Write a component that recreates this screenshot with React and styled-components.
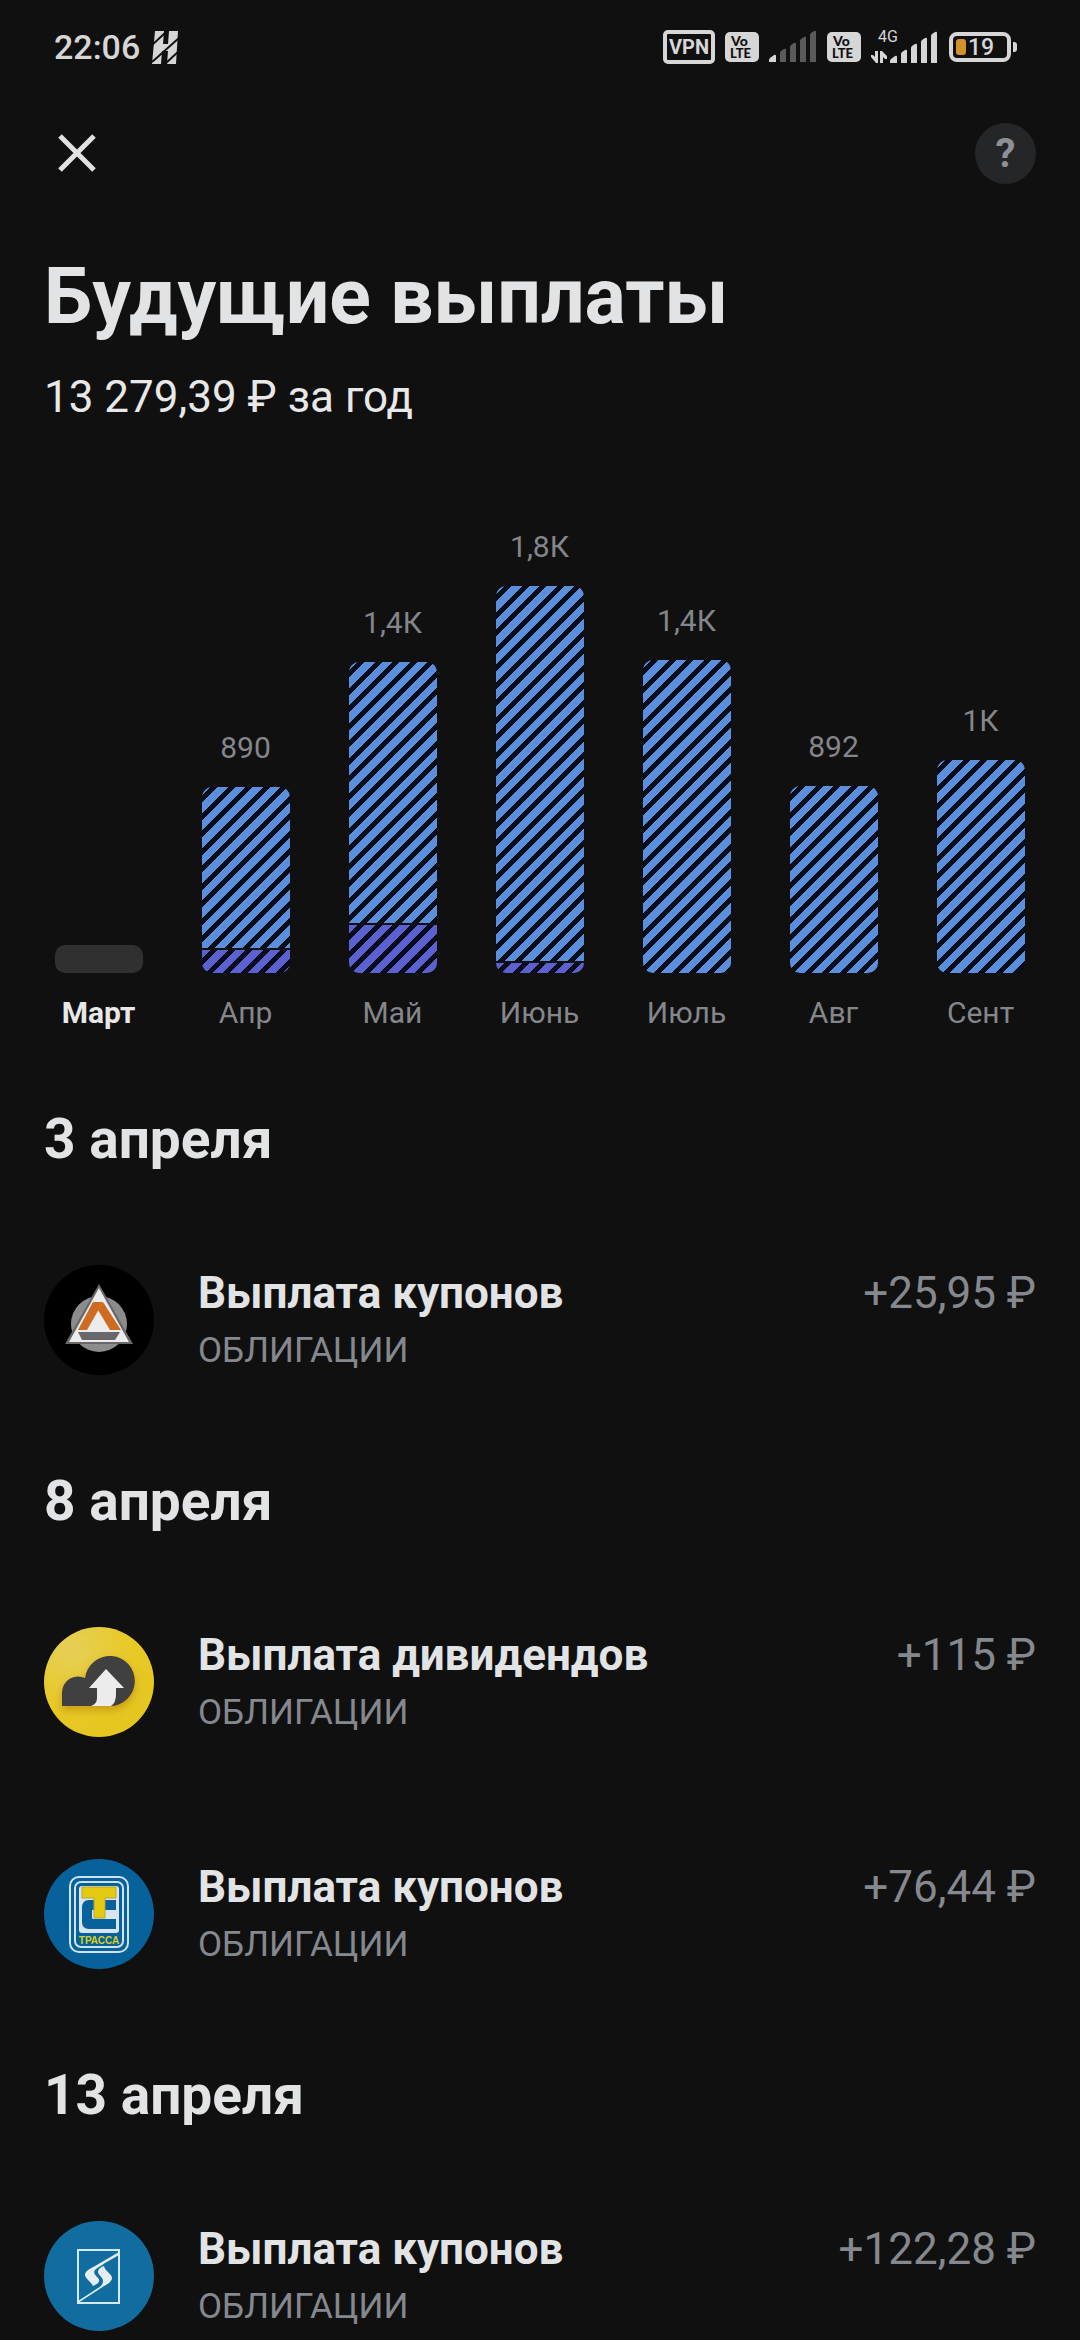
import styled, { createGlobalStyle } from "styled-components";

const GlobalStyle = createGlobalStyle`
    * {
        box-sizing: border-box;
    }

    body {
        margin: 0;
        background-color: #101010;
        color: #e2e3e4;
        font-family: Roboto, "Noto Sans", sans-serif;
    }

    h1, h2, h3, p, ul {
        margin: 0;
        padding: 0;
    }
`;

const Screen = styled.div`
    height: 100vh;
    overflow-y: auto;
    scrollbar-width: none;
`;

const StatusBar = styled.div`
    display: flex;
    align-items: center;
    justify-content: space-between;
    height: 94px;
    padding: 0 62px 0 54px;
`;

const StatusGroup = styled.div`
    display: flex;
    align-items: center;
    gap: ${({ $gap }) => $gap}px;
`;

const Clock = styled.span`
    font-size: 34px;
    line-height: 40px;
    font-weight: 500;
    color: #d6d6d6;
`;

const TopBar = styled.header`
    display: flex;
    align-items: center;
    justify-content: space-between;
    height: 118px;
    padding: 0 44px;
`;

const CloseButton = styled.button`
    display: flex;
    padding: 14px;
    border: none;
    background: none;
    cursor: pointer;
`;

const HelpButton = styled.button`
    width: 61px;
    height: 61px;
    padding: 0;
    border: none;
    border-radius: 50%;
    background-color: #252627;
    color: #8d9096;
    font-family: inherit;
    font-size: 40px;
    line-height: 61px;
    font-weight: 700;
    cursor: pointer;
`;

const Summary = styled.section`
    padding: 40px 44px 0;
`;

const Title = styled.h1`
    font-size: 77px;
    line-height: 90px;
    font-weight: 700;
`;

const Total = styled.p`
    margin-top: 29px;
    font-size: 44px;
    line-height: 52px;
    color: #e8e8e8;
`;

const Chart = styled.div`
    display: flex;
    align-items: flex-end;
    padding: 106px 26px 43px 25px;
`;

const Column = styled.div`
    flex: 1;
    display: flex;
    flex-direction: column;
    align-items: center;
`;

const ChartLabel = styled.span`
    font-size: 30px;
    line-height: 36px;
    font-weight: ${({ $active }) => ($active ? 700 : 400)};
    color: ${({ $active }) => ($active ? "#e8e8e8" : "#84868b")};
`;

const Bar = styled.div`
    display: flex;
    flex-direction: column;
    gap: 2px;
    width: 88px;
    margin: 21px 0 22px;
    border-radius: 10px;
    overflow: hidden;
`;

const EmptyBar = styled(Bar)`
    height: 28px;
    background-color: #303030;
`;

// two stripe periods per tile side, so the tiles join without a seam
const Segment = styled.div`
    background-image: repeating-linear-gradient(
        135deg,
        ${({ $color }) => $color} 0 12.5%,
        ${({ $back }) => $back} 12.5% 22.5%,
        ${({ $color }) => $color} 22.5% 25%
    );
    background-size: 35px 35px;
`;

const DayTitle = styled.h2`
    padding: 33px 44px;
    font-size: 55px;
    line-height: 64px;
    font-weight: 700;
`;

const PaymentList = styled.ul`
    list-style: none;
`;

const Payment = styled.li`
    display: flex;
    align-items: center;
    gap: 44px;
    height: 232px;
    padding: 0 44px;

    svg {
        flex: none;
    }
`;

const PaymentText = styled.div`
    flex: 1;
    display: flex;
    flex-direction: column;
    gap: 11px;
    padding-bottom: 2px;
`;

const PaymentLine = styled.div`
    display: flex;
    justify-content: space-between;
    font-size: 44px;
    line-height: 52px;
`;

const PaymentName = styled.h3`
    font-size: inherit;
    font-weight: 700;
`;

const Amount = styled.span`
    color: #85888e;
`;

const Kind = styled.p`
    font-size: 35px;
    line-height: 42px;
    color: #85888e;
`;

const MONTHS = [
    { name: "Март", active: true },
    { name: "Апр", value: "890", coupons: 161, dividends: 23 },
    { name: "Май", value: "1,4К", coupons: 261, dividends: 48 },
    { name: "Июнь", value: "1,8К", coupons: 375, dividends: 10 },
    { name: "Июль", value: "1,4К", coupons: 313 },
    { name: "Авг", value: "892", coupons: 187 },
    { name: "Сент", value: "1К", coupons: 213 },
];

const StatusLogo = () => (
    <svg width="27" height="33" viewBox="0 0 27 33">
        <path d="M3 0h9l-1 13h5l1-13h9l-2 33h-9l1-13h-6l-1 13H0z" fill="#d6d6d6" />
        <path d="M0 14 13 2M0 31 27 7M13 33 27 20" stroke="#101010" strokeWidth="2" />
    </svg>
);

const VpnIcon = () => (
    <svg width="52" height="34" viewBox="0 0 52 34">
        <rect x="2" y="2" width="48" height="30" rx="3" fill="none" stroke="#d6d6d6" strokeWidth="4" />
        <text x="26" y="24" textAnchor="middle" fontSize="20" fontWeight="700" fill="#d6d6d6">
            VPN
        </text>
    </svg>
);

const VolteIcon = () => (
    <svg width="34" height="30" viewBox="0 0 34 30" fontFamily="Lato, sans-serif" fontWeight="900" fill="#101010">
        <rect width="34" height="30" rx="5" fill="#d6d6d6" />
        <text x="6" y="14" fontSize="14">
            Vo
        </text>
        <text x="5" y="26" fontSize="13">
            LTE
        </text>
    </svg>
);

const SIGNAL_BARS = [
    "M0 31v-2q0-1 1-2l4-3q2-1 2 1v6z",
    "M11 31v-9q0-1 1-2l3-2q2-1 2 1v12z",
    "M21 31v-15q0-1 1-2l3-2q2-1 2 1v18z",
    "M31 31v-21q0-1 1-2l3-2q2-1 2 1v24z",
    "M41 31v-27q0-1 1-2l3-2q2-1 2 1v30z",
];

const SignalBars = ({ level }) =>
    SIGNAL_BARS.map((d, index) => <path key={d} d={d} fill={index < level ? "#d6d6d6" : "#5a5a5a"} />);

const SignalIcon = ({ level }) => (
    <svg width="48" height="32" viewBox="0 0 48 32">
        <SignalBars level={level} />
    </svg>
);

const MobileDataIcon = () => (
    <svg width="68" height="42" viewBox="0 -4 68 42" fill="#d6d6d6">
        <text x="7" y="12" fontSize="16">
            4G
        </text>
        <path d="M4 21h3v12H5L0 27v-2h2l2 2zM9 33V21h2l5 5v3h-2l-2-2v6z" />
        <g transform="translate(19 2)">
            <SignalBars level={5} />
        </g>
    </svg>
);

const BatteryIcon = () => (
    <svg width="69" height="30" viewBox="0 0 69 30">
        <rect x="2" y="2" width="58" height="26" rx="6" fill="none" stroke="#d6d6d6" strokeWidth="4" />
        <rect x="7" y="7" width="10" height="16" rx="3" fill="#d2922b" />
        <path d="M64 10h1q3 0 3 3v4q0 3-3 3h-1z" fill="#d6d6d6" />
        <text x="19" y="23" fontSize="23" fontWeight="500" fill="#d6d6d6">
            19
        </text>
    </svg>
);

const CloseIcon = () => (
    <svg width="38" height="38" viewBox="0 0 38 38">
        <path d="M2 2 36 36M36 2 2 36" stroke="#e2e2e2" strokeWidth="5" />
    </svg>
);

const TriangleLogo = () => (
    <svg width="110" height="110" viewBox="0 0 110 110">
        <circle cx="55" cy="55" r="55" fill="#000" />
        <circle cx="55" cy="59" r="28" fill="#8c8c8c" />
        <path d="M55 19 89 79H21z" fill="#69676a" />
        <path d="M55 23 85 77H25z" fill="#ececec" />
        <path d="M49 37h10L43 65H34z" fill="#ce6b20" />
        <path d="M59 37 77 65H66L54 45z" fill="#ce6b20" />
        <path d="M34 67h42l-5 8H38z" fill="#69676a" />
    </svg>
);

const CloudLogo = () => (
    <svg width="110" height="110" viewBox="0 0 110 110">
        <defs>
            <radialGradient id="cloudBack" cx="0.25" cy="0.2" r="0.9">
                <stop offset="0" stopColor="#e6cf58" />
                <stop offset="0.6" stopColor="#e8c926" />
                <stop offset="1" stopColor="#e5c51f" />
            </radialGradient>
            <filter id="cloudShadow" x="-20%" y="-20%" width="140%" height="150%">
                <feDropShadow dx="0" dy="4" stdDeviation="4" floodColor="#a87400" floodOpacity="0.55" />
            </filter>
        </defs>
        <circle cx="55" cy="55" r="55" fill="url(#cloudBack)" />
        <path
            d="M18 79V65A16 16 0 0 1 41 51A25 25 0 1 1 66 79z"
            fill="#403f3f"
            filter="url(#cloudShadow)"
        />
        <path d="M62 42 80 61H72V67Q72 76 67 79H47Q53 77 53 71V61H45z" fill="#ececec" />
    </svg>
);

const TrassaLogo = () => (
    <svg width="110" height="110" viewBox="0 0 110 110">
        <circle cx="55" cy="55" r="55" fill="#07619b" />
        <rect x="26" y="18" width="58" height="75" rx="9" fill="none" stroke="#cfe2ef" strokeWidth="2" />
        <rect x="31" y="23" width="48" height="65" rx="6" fill="none" stroke="#cfe2ef" strokeWidth="2" />
        <rect x="35" y="27" width="40" height="47" rx="3" fill="#d9e4ee" />
        <path d="M72 41H45Q38 41 38 49V63Q38 70 45 70H72V60H49Q48 60 48 58V51H72z" fill="#07619b" />
        <path d="M38 28H72V39H61V59H50V39H38z" fill="#e3cb11" stroke="#b9a634" />
        <text
            x="55"
            y="85"
            textAnchor="middle"
            fontFamily="Liberation Sans, sans-serif"
            fontSize="10"
            fontWeight="700"
            fill="#d7cf22"
        >
            ТРАССА
        </text>
    </svg>
);

const StreamLogo = () => (
    <svg width="110" height="110" viewBox="0 0 110 110">
        <circle cx="55" cy="55" r="55" fill="#116c9f" />
        <rect x="34" y="29" width="41" height="53" fill="none" stroke="#d5e9f3" strokeWidth="2" />
        <path
            d="M75 31 51 45C43 49 41 51 41 54C41 57 47 61 49 65C54 63 57 60 54 57C50 53 49 51 52 48C54 46 57 45 61 42L75 34z"
            fill="#e4eef4"
        />
        <path
            d="M34 80 48 71C54 67 59 65 59 60C59 56 54 54 54 51C54 48 57 46 60 45C61 50 68 53 68 57C68 61 62 64 57 67L34 82z"
            fill="#e4eef4"
        />
    </svg>
);

const DAYS = [
    {
        date: "3 апреля",
        payments: [{ name: "Выплата купонов", amount: "+25,95 ₽", Logo: TriangleLogo }],
    },
    {
        date: "8 апреля",
        payments: [
            { name: "Выплата дивидендов", amount: "+115 ₽", Logo: CloudLogo },
            { name: "Выплата купонов", amount: "+76,44 ₽", Logo: TrassaLogo },
        ],
    },
    {
        date: "13 апреля",
        payments: [{ name: "Выплата купонов", amount: "+122,28 ₽", Logo: StreamLogo }],
    },
];

const MonthColumn = ({ month }) => {
    return (
        <Column>
            {month.value && <ChartLabel>{month.value}</ChartLabel>}
            {month.value ? (
                <Bar>
                    <Segment $color="#5b8edb" $back="#050d1b" style={{ height: month.coupons }} />
                    {month.dividends && (
                        <Segment $color="#5b62d0" $back="#0a0b1c" style={{ height: month.dividends }} />
                    )}
                </Bar>
            ) : (
                <EmptyBar />
            )}
            <ChartLabel $active={month.active}>{month.name}</ChartLabel>
        </Column>
    );
};

const App = () => {
    return (
        <>
            <GlobalStyle />
            <Screen>
                <StatusBar>
                    <StatusGroup $gap={12}>
                        <Clock>22:06</Clock>
                        <StatusLogo />
                    </StatusGroup>
                    <StatusGroup $gap={10}>
                        <VpnIcon />
                        <VolteIcon />
                        <SignalIcon level={1} />
                        <VolteIcon />
                        <MobileDataIcon />
                        <BatteryIcon />
                    </StatusGroup>
                </StatusBar>
                <TopBar>
                    <CloseButton aria-label="Закрыть">
                        <CloseIcon />
                    </CloseButton>
                    <HelpButton>?</HelpButton>
                </TopBar>
                <Summary>
                    <Title>Будущие выплаты</Title>
                    <Total>13 279,39 ₽ за год</Total>
                </Summary>
                <Chart>
                    {MONTHS.map((month) => (
                        <MonthColumn month={month} key={month.name} />
                    ))}
                </Chart>
                {DAYS.map(({ date, payments }) => (
                    <section key={date}>
                        <DayTitle>{date}</DayTitle>
                        <PaymentList>
                            {payments.map(({ name, amount, Logo }) => (
                                <Payment key={amount}>
                                    <Logo />
                                    <PaymentText>
                                        <PaymentLine>
                                            <PaymentName>{name}</PaymentName>
                                            <Amount>{amount}</Amount>
                                        </PaymentLine>
                                        <Kind>ОБЛИГАЦИИ</Kind>
                                    </PaymentText>
                                </Payment>
                            ))}
                        </PaymentList>
                    </section>
                ))}
            </Screen>
        </>
    );
};

export default App;
